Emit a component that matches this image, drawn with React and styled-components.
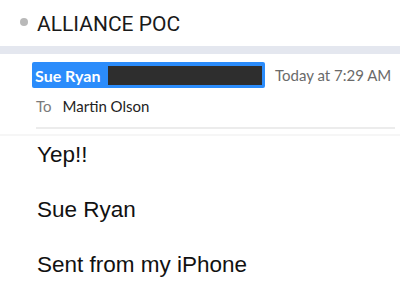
import React from 'react'
import styled, { createGlobalStyle } from 'styled-components'

const GlobalStyle = createGlobalStyle`
  html, body {
    margin: 0;
    padding: 0;
    background: #ffffff;
  }
`

const Page = styled.div`
  width: 400px;
  height: 284px;
  overflow: hidden;
  background: #ffffff;
  font-family: Lato, "Noto Sans", sans-serif;
`

const Header = styled.div`
  height: 46px;
  display: flex;
  align-items: center;
  padding-left: 20px;
  gap: 9px;
`

const Dot = styled.span`
  width: 8px;
  height: 8px;
  border-radius: 50%;
  background: #b9b9b9;
  margin-top: -2px;
`

const Subject = styled.h1`
  margin: 2px 0 0;
  font-family: Roboto, "Noto Sans", sans-serif;
  font-size: 21px;
  font-weight: 400;
  color: #1a1a1a;
`

const Band = styled.div`
  height: 8px;
  background: #e4e7ef;
`

const Meta = styled.div`
  padding: 8px 5px 0 32px;
`

const FromRow = styled.div`
  display: flex;
  align-items: center;
  height: 26px;
  white-space: nowrap;
`

const Selected = styled.div`
  display: flex;
  align-items: center;
  height: 26px;
  width: 233px;
  box-sizing: border-box;
  padding: 0 3px;
  border-radius: 2px;
  background: #2b8cfb;
`

const Sender = styled.span`
  font-size: 16px;
  font-weight: 700;
  color: #ffffff;
`

const Redacted = styled.span`
  flex: 1;
  height: 19px;
  margin-left: 8px;
  background: #2e2e2e;
`

const Stamp = styled.span`
  margin-left: 10px;
  font-size: 15px;
  color: #6a6a6a;
`

const ToRow = styled.div`
  display: flex;
  align-items: center;
  gap: 11px;
  height: 36px;
  padding-left: 4px;
  font-size: 15px;
`

const ToLabel = styled.span`
  color: #7a7a7a;
`

const ToName = styled.span`
  color: #222222;
`

const Divider = styled.div`
  height: 2px;
  margin: 3px 0 0 4px;
  background: #ececec;
`

const Faint = styled.div`
  height: 2px;
  margin-top: 5px;
  background: #f6f6f6;
`

const Body = styled.div`
  padding: 0 0 0 37px;
  font-family: "Liberation Sans", Arial, sans-serif;
  font-size: 22.5px;
  color: #111111;
`

const Para = styled.p`
  margin: 0 0 17px;
  line-height: 38px;
`

export default function App() {
  return (
    <Page>
      <GlobalStyle />
      <Header>
        <Dot />
        <Subject>ALLIANCE POC</Subject>
      </Header>
      <Band />
      <Meta>
        <FromRow>
          <Selected>
            <Sender>Sue Ryan</Sender>
            <Redacted />
          </Selected>
          <Stamp>Today at 7:29 AM</Stamp>
        </FromRow>
        <ToRow>
          <ToLabel>To</ToLabel>
          <ToName>Martin Olson</ToName>
        </ToRow>
        <Divider />
      </Meta>
      <Faint />
      <Body>
        <Para>Yep!!</Para>
        <Para>Sue Ryan</Para>
        <Para>Sent from my iPhone</Para>
      </Body>
    </Page>
  )
}
